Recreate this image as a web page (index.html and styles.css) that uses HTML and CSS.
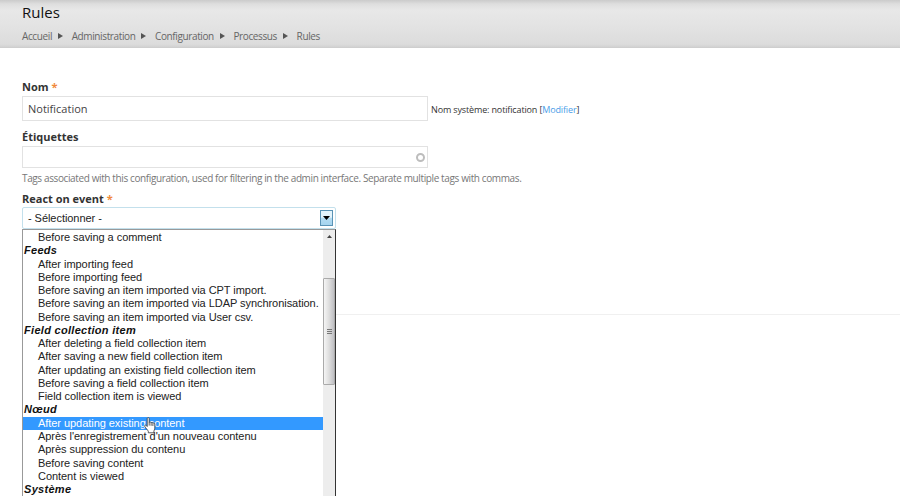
FILE: index.html
```html
<!DOCTYPE html>
<html lang="fr">
<head>
<meta charset="utf-8">
<title>Rules</title>
<link rel="stylesheet" href="styles.css">
</head>
<body>
<header class="branding">
  <h1>Rules</h1>
  <nav class="breadcrumb">
    <a>Accueil</a><i class="arrow"></i><a>Administration</a><i class="arrow"></i><a>Configuration</a><i class="arrow"></i><a>Processus</a><i class="arrow"></i><a>Rules</a>
  </nav>
</header>
<main class="form">
  <label class="label">Nom <span class="required">*</span></label>
  <div class="row">
    <div class="field name">Notification</div>
    <span class="machine">Nom système: notification [<a>Modifier</a>]</span>
  </div>
  <label class="label second">Étiquettes</label>
  <div class="field tags"><span class="throbber"></span></div>
  <p class="help">Tags associated with this configuration, used for filtering in the admin interface. Separate multiple tags with commas.</p>
  <label class="label third">React on event <span class="required">*</span></label>
  <div class="select">
    <span>- Sélectionner -</span>
    <span class="button"><svg width="7" height="4" viewBox="0 0 7 4"><path d="M0 0h7L3.5 4z"/></svg></span>
    <div class="menu">
      <ul class="options">
        <li>Before saving a comment</li>
        <li class="group">Feeds</li>
        <li>After importing feed</li>
        <li>Before importing feed</li>
        <li>Before saving an item imported via CPT import.</li>
        <li>Before saving an item imported via LDAP synchronisation.</li>
        <li>Before saving an item imported via User csv.</li>
        <li class="group">Field collection item</li>
        <li>After deleting a field collection item</li>
        <li>After saving a new field collection item</li>
        <li>After updating an existing field collection item</li>
        <li>Before saving a field collection item</li>
        <li>Field collection item is viewed</li>
        <li class="group">Nœud</li>
        <li class="active">After updating existing content</li>
        <li>Après l'enregistrement d'un nouveau contenu</li>
        <li>Après suppression du contenu</li>
        <li>Before saving content</li>
        <li>Content is viewed</li>
        <li class="group">Système</li>
      </ul>
      <div class="scrollbar">
        <svg class="up" width="5" height="3" viewBox="0 0 5 3"><path d="M0 3h5L2.5 0z"/></svg>
        <div class="thumb"><i></i><i></i><i></i></div>
      </div>
      <svg class="pointer" width="12" height="17" viewBox="0 0 12 17"><path d="M3.2 9.500V1.600C3.200.2 5.200.2 5.200 1.600v4c.2-.9 1.800-.8 1.900.3.3-.8 1.700-.6 1.800.4.4-.7 1.900-.4 1.900.7v4.200c0 1.200-.8 2-.9 3v1.600H4.300v-1.500C3.700 12.800 1.700 11.300.8 9.500.2 8.300 1.500 7.600 2.300 8.500z"/><path class="fingers" d="M5.200 5.600v3M7.100 6v2.800M8.900 6.400v2.600"/></svg>
    </div>
  </div>
  <hr class="divider">
</main>
</body>
</html>
```
FILE: styles.css
```css
* { box-sizing: border-box; }
html, body { height: 496px; overflow: hidden; }
body {
  margin: 0;
  background: #fff;
  color: #333;
  font-family: "Open Sans", "Noto Sans", sans-serif;
  font-size: 11px;
}
.branding {
  height: 48px;
  padding: 3px 22px 0;
  background: linear-gradient(#cbcbcb, #dedede 4px, #e8e8e8 10px, #e3e3e3 26px, #dcdcdc 44px, #d2d2d2);
  border-bottom: 1px solid #cecece;
}
h1 { margin: 0; font-size: 15px; font-weight: 400; line-height: 18px; color: #111; }
.breadcrumb { display: flex; align-items: center; margin-top: 7px; height: 15px; font-size: 10px; letter-spacing: -.38px; color: #666; }
.arrow { margin: 0 8.6px 0 6px; border-left: 5px solid #555; border-top: 3px solid transparent; border-bottom: 3px solid transparent; }
.form { padding: 31px 0 0 22px; }
.label { display: block; height: 17px; line-height: 15px; font-weight: 700; font-size: 11px; color: #333; }
.required { color: #f08a3c; font-weight: 700; }
.row { display: flex; align-items: center; }
.field { width: 406px; border: 1px solid #e2e2e2; background: #fff; }
.name { height: 25px; padding-left: 5px; line-height: 23px; color: #444; }
.machine { margin: 2px 0 0 3px; font-size: 9px; letter-spacing: -.14px; color: #333; white-space: nowrap; }
.machine a { color: #4a9de8; }
.second { margin-top: 8px; }
.tags { display: flex; align-items: center; justify-content: flex-end; height: 22px; padding-right: 2px; }
.throbber { width: 9px; height: 9px; border: 2px solid #bdbdbd; border-radius: 50%; }
.help { margin: 3px 0 0; height: 15px; line-height: 15px; font-size: 10px; letter-spacing: -.38px; color: #777; white-space: nowrap; }
.third { margin-top: 5px; height: 16px; }
.select {
  position: relative;
  display: flex;
  align-items: center;
  justify-content: space-between;
  width: 314px;
  height: 22px;
  padding: 0 2px 0 5px;
  border: 1px solid #c3e0ec;
  border-radius: 2px;
  font: 11px "Liberation Sans", Arial, sans-serif;
  letter-spacing: -.05px;
  color: #222;
}
.button { display: flex; align-items: center; justify-content: center; width: 13px; height: 16px; border: 1px solid #5a93b5; background: linear-gradient(#e4f4fc 45%, #b5dcf2 50%, #a5d4ee); }
.menu {
  position: absolute;
  z-index: 1;
  left: -1px;
  top: 21px;
  display: flex;
  width: 314px;
  height: 267px;
  border: 1px solid #999;
  border-right-color: #333;
  border-bottom: 0;
  background: #fff;
}
.options { flex: 1; margin: 0; padding: 1px 0 0; list-style: none; white-space: nowrap; overflow: hidden; }
.options li { height: 13.27px; padding-left: 15px; line-height: 13.27px; }
.options .group { padding-left: 1px; font-weight: 700; font-style: italic; letter-spacing: .3px; color: #111; }
.options .active { background: #3399ff; color: #fff; }
.scrollbar { width: 12px; padding-top: 5px; background: #ededed; }
.up { display: block; margin-left: 4px; fill: #444; }
.thumb { display: flex; flex-direction: column; align-items: center; justify-content: center; gap: 1px; margin-top: 40px; height: 107px; border: 1px solid #aaa; border-radius: 1px; background: linear-gradient(90deg, #f5f5f5, #dedede 50%, #bfbfc3); }
.thumb i { width: 5px; height: 1px; background: #777; }
.pointer { position: absolute; left: 121px; top: 187px; fill: #fff; stroke: #333; stroke-width: .8; }
.fingers { fill: none; }
.divider { margin: 85px 0 0; border: 0; border-top: 1px solid #f0f0f0; }
```
